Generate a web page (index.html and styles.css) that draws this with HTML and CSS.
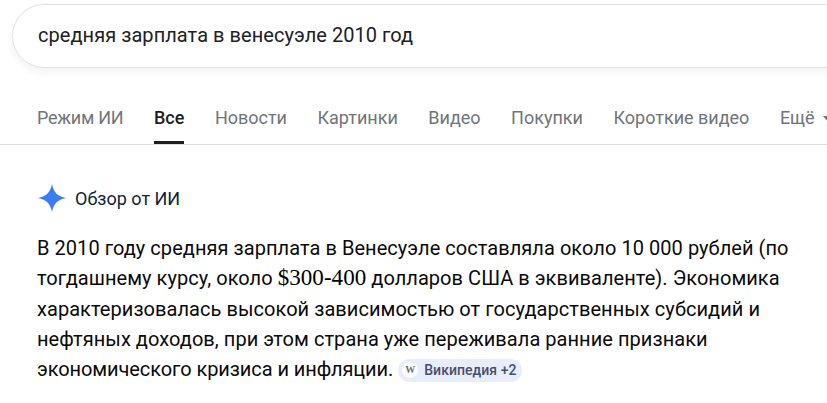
FILE: index.html
```html
<!DOCTYPE html>
<html lang="ru">
<head>
    <meta charset="UTF-8">
    <title>средняя зарплата в венесуэле 2010 год</title>
    <link rel="stylesheet" href="styles.css">
</head>
<body>
    <div class="search-wrap">
        <div class="search-box">средняя зарплата в венесуэле 2010 год</div>
    </div>

    <nav class="tabs">
        <a class="tab">Режим ИИ</a>
        <a class="tab active">Все</a>
        <a class="tab">Новости</a>
        <a class="tab">Картинки</a>
        <a class="tab">Видео</a>
        <a class="tab">Покупки</a>
        <a class="tab">Короткие видео</a>
        <a class="tab more">Ещё
            <svg class="caret" width="10" height="6" viewBox="0 0 10 6"><path d="M0 0h10L5 6z" fill="#70757a"/></svg>
        </a>
    </nav>

    <section class="overview">
        <div class="overview-head">
            <svg class="spark" width="30" height="30" viewBox="0 0 30 30"><path d="M15 1c1.5 8 5.5 12.5 14 14-8.5 1.5-12.5 6-14 14-1.5-8-5.5-12.5-14-14 8.5-1.5 12.5-6 14-14z" fill="#3b7cf0"/></svg>
            <span>Обзор от ИИ</span>
        </div>
        <p class="answer">В 2010 году средняя зарплата в Венесуэле составляла около 10 000 рублей (по тогдашнему курсу, около <span class="serif">$300-400</span> долларов США в эквиваленте). Экономика характеризовалась высокой зависимостью от государственных субсидий и нефтяных доходов, при этом страна уже переживала ранние признаки <span class="tight">экономического кризиса и инфляции.</span><span class="source"><span class="source-icon">W</span>Википедия +2</span></p>
    </section>
</body>
</html>
```

FILE: styles.css
```css
* {
    margin: 0;
    padding: 0;
    box-sizing: border-box;
}

html, body {
    height: 403px;
    overflow: hidden;
}

body {
    background: #fff;
    color: #1f1f1f;
    font-family: Roboto, "Noto Sans", sans-serif;
}

.search-wrap {
    padding: 4px 0 0 12px;
    overflow: hidden;
    height: 90px;
}

.search-box {
    width: 900px;
    height: 64px;
    border: 1px solid #dfe1e5;
    border-radius: 32px;
    padding-left: 25px;
    line-height: 60px;
    font-size: 20px;
    letter-spacing: 0.05px;
    color: #202124;
    box-shadow: 0 4px 8px rgba(32, 33, 36, 0.06);
}

.tabs {
    display: flex;
    gap: 30.5px;
    height: 55px;
    padding-left: 37px;
    border-bottom: 1px solid #dadce0;
    white-space: nowrap;
    overflow: hidden;
}

.tab {
    font-size: 18px;
    line-height: 56px;
    color: #70757a;
    height: 54px;
}

.tab:first-child {
    letter-spacing: -0.25px;
}

.tab.active {
    color: #1f1f1f;
    font-weight: 500;
    border-bottom: 3px solid #1f1f1f;
}

.caret {
    margin-left: 4px;
    vertical-align: 2px;
}

.overview {
    padding: 0 37px;
}

.overview-head {
    display: flex;
    align-items: center;
    gap: 8px;
    margin-top: 38px;
    height: 30px;
    font-size: 18px;
    color: #0f2338;
}

.answer {
    margin-top: 20px;
    font-size: 20px;
    line-height: 30.3px;
    letter-spacing: 0.05px;
    color: #0a0a0a;
    width: 780px;
}

.serif {
    font-family: "Liberation Serif", serif;
    font-size: 23px;
    color: #000;
}

.tight {
    letter-spacing: -0.08px;
}

.source {
    display: inline-flex;
    align-items: center;
    gap: 6px;
    height: 23px;
    padding: 0 6px 0 4px;
    margin-left: 5px;
    border-radius: 12px;
    background: #e8edfb;
    font-size: 14px;
    font-weight: 500;
    color: #474f6e;
    vertical-align: 3px;
}

.source-icon {
    display: flex;
    align-items: center;
    justify-content: center;
    width: 16px;
    height: 16px;
    border-radius: 50%;
    background: #fff;
    font-family: "Liberation Serif", serif;
    font-size: 10px;
    font-weight: 700;
    color: #6f6f6f;
}
```
